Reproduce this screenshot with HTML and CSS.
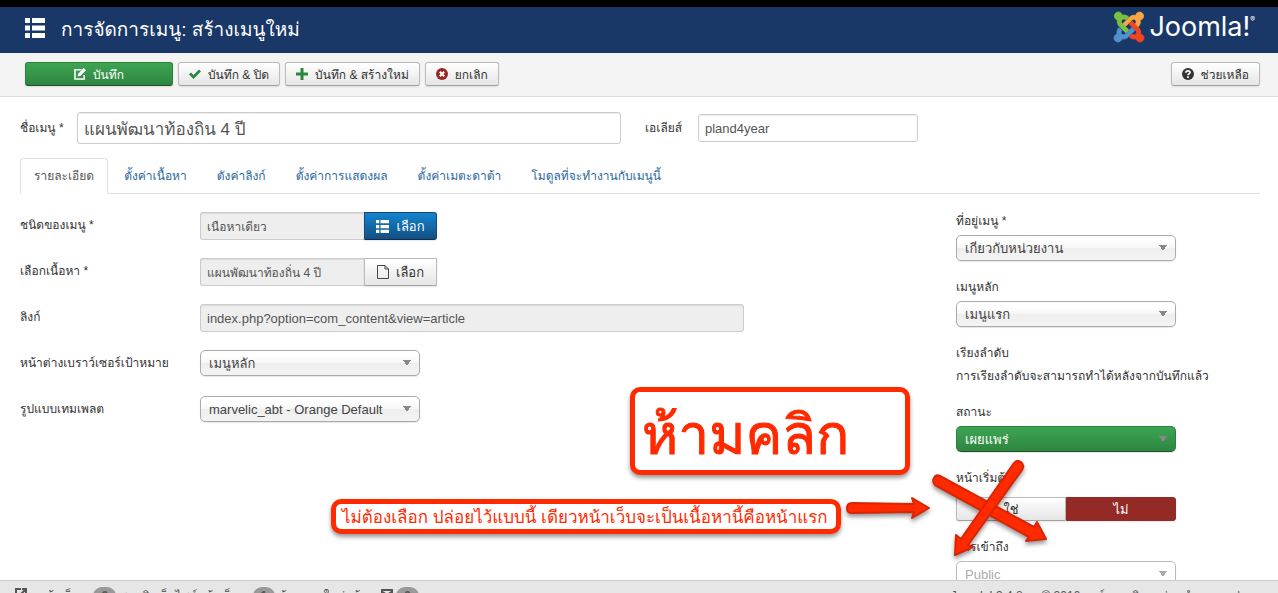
FILE: index.html
```html
<!DOCTYPE html>
<html lang="th">
  <head>
    <meta charset="UTF-8" />
    <meta name="viewport" content="width=device-width, initial-scale=1.0" />
    <title>การจัดการเมนู: สร้างเมนูใหม่</title>
    <link rel="stylesheet" href="styles.css">
  </head>
  <body>
    <!-- Header -->
    <header class="header">
      <svg class="header-icon" viewBox="0 0 20 20" aria-hidden="true">
        <path d="M0 0h5v5H0zM7 0h13v5H7zM0 7.500h5v5H0zM7 7.500h13v5H7zM0 15h5v5H0zM7 15h13v5H7z" />
      </svg>
      <h1>การจัดการเมนู: สร้างเมนูใหม่</h1>
      <a class="logo" href="#" aria-label="Joomla!">
        <svg class="logo-mark" viewBox="0 0 24 24" stroke-width=".6" aria-hidden="true">
          <path fill="#5091cd" stroke="#5091cd" d="M16.719 14.759L14.22 17.26l-2.37 2.37-.462.466c-1.368 1.365-3.297 1.83-5.047 1.397-.327 1.424-1.604 2.49-3.13 2.49C1.438 23.983 0 22.547 0 20.772c0-1.518 1.055-2.789 2.469-3.132-.446-1.765.006-3.726 1.394-5.112l.18-.183 2.376 2.369-.184.181c-.769.779-.769 2.024 0 2.789.771.78 2.022.78 2.787 0l.465-.465 2.367-2.37 2.502-2.506z" />
          <path fill="#f44321" stroke="#f44321" d="M17.643 21.411c-1.822.563-3.885.12-5.328-1.318l-.18-.185 2.365-2.369.18.184c.771.768 2.018.768 2.787 0 .765-.765.769-2.01-.004-2.781l-.466-.465-2.365-2.37-2.502-2.503 2.37-2.369 2.499 2.505 2.367 2.37.464.464c1.365 1.36 1.846 3.278 1.411 5.021 1.56.224 2.759 1.56 2.759 3.18 0 1.784-1.439 3.21-3.209 3.21-1.545 0-2.851-1.096-3.135-2.565z" />
          <path fill="#f9a541" stroke="#f9a541" d="M6.975 9.461L9.458 6.98l2.37-2.369.464-.461c1.365-1.365 3.315-1.842 5.063-1.401C17.6 1.217 18.932.03 20.539.03c1.771 0 3.204 1.437 3.204 3.208 0 1.640-1.225 2.993-2.809 3.186.461 1.772.015 3.764-1.398 5.175l-.18.179-2.369-2.37.18-.181c.768-.765.768-2.007-.004-2.786-.766-.765-2.014-.765-2.781 0l-.465.466-2.369 2.366L9.043 11.78z" />
          <path fill="#7ac143" stroke="#7ac143" d="M.262 3.228C.262 1.452 1.695.016 3.471.016c1.532 0 2.814 1.069 3.134 2.505 1.730-.46 3.664.001 5.026 1.366l.184.184L9.45 6.438l-.184-.181c-.766-.765-2.016-.765-2.783 0-.766.765-.77 2.010-.002 2.776l.466.465 4.866 4.872-2.369 2.369-4.866-4.872-.461-.465C2.759 10.040 2.293 8.110 2.734 6.365 1.300 6.036.262 4.745.262 3.228z" />
        </svg>
        <span class="logo-text">Joomla!<sup>®</sup></span>
      </a>
    </header>

    <!-- Toolbar -->
    <div class="toolbar">
      <button class="btn btn-success btn-save">
        <svg class="icon" viewBox="0 0 12 12" aria-hidden="true">
          <path fill="none" stroke="currentColor" stroke-width="1.600" d="M7.500 1.800H1v9.200h9.200V7" />
          <path fill="currentColor" d="M3.500 8.500l.6-2.800L9.700 0 12 2.300 6.300 8z" />
        </svg>
        บันทึก
      </button>
      <button class="btn">
        <svg class="icon green" viewBox="0 0 12 12" aria-hidden="true">
          <path fill="none" stroke="currentColor" stroke-width="2.800" d="M1 5.500l3.500 3.500L11 2.500" />
        </svg>
        บันทึก &amp; ปิด
      </button>
      <button class="btn">
        <svg class="icon green" viewBox="0 0 12 12" aria-hidden="true">
          <path fill="currentColor" d="M4.500 0h3v4.500H12v3H7.500V12h-3V7.500H0v-3h4.500z" />
        </svg>
        บันทึก &amp; สร้างใหม่
      </button>
      <button class="btn">
        <svg class="icon red" viewBox="0 0 12 12" aria-hidden="true">
          <circle cx="6" cy="6" r="6" fill="currentColor" />
          <path stroke="#fff" stroke-width="2" d="M3.800 3.800l4.400 4.400M8.200 3.800l-4.400 4.400" />
        </svg>
        ยกเลิก
      </button>
      <button class="btn btn-help">
        <svg class="icon" viewBox="0 0 12 12" aria-hidden="true">
          <circle cx="6" cy="6" r="6" fill="currentColor" />
          <path fill="none" stroke="#fff" stroke-width="1.700" d="M3.800 4.800C3.900 2.300 8 2.400 8 4.400 8 5.800 6 5.700 6 7.300M6 8.300v1.600" />
        </svg>
        ช่วยเหลือ
      </button>
    </div>

    <main class="content">
      <!-- Title and alias -->
      <div class="title-row">
        <label for="title">ชื่อเมนู *</label>
        <input class="field title-input" id="title" type="text" value="แผนพัฒนาท้องถิน 4 ปี">
        <label class="alias-label" for="alias">เอเลียส์</label>
        <input class="field alias-input" id="alias" type="text" value="pland4year">
      </div>

      <!-- Tabs -->
      <nav class="tabs">
        <a class="active" href="#details">รายละเอียด</a>
        <a href="#content">ตั้งค่าเนื้อหา</a>
        <a href="#link">ตังค่าลิงก์</a>
        <a href="#display">ตั้งค่าการแสดงผล</a>
        <a href="#meta">ตั้งค่าเมตะดาต้า</a>
        <a href="#modules">โมดูลที่จะทำงานกับเมนูนี้</a>
      </nav>

      <div class="columns" id="details">
        <div class="main-col">
          <div class="control">
            <label for="type">ชนิดของเมนู *</label>
            <div class="append">
              <input class="field" id="type" type="text" value="เนือหาเดียว" readonly>
              <button class="btn btn-primary">
                <svg class="icon-list" viewBox="0 0 20 20" aria-hidden="true">
                  <path d="M0 0h5v5H0zM7 0h13v5H7zM0 7.500h5v5H0zM7 7.500h13v5H7zM0 15h5v5H0zM7 15h13v5H7z" />
                </svg>
                เลือก
              </button>
            </div>
          </div>
          <div class="control">
            <label for="article">เลือกเนื้อหา *</label>
            <div class="append">
              <input class="field" id="article" type="text" value="แผนพัฒนาท้องถิ่น 4 ปี" readonly>
              <button class="btn">
                <svg class="icon-file" viewBox="0 0 12 14" aria-hidden="true">
                  <path d="M.5.500h7.500l3.500 3.500v9.500H.5zM8 .500v3.500h3.500" />
                </svg>
                เลือก
              </button>
            </div>
          </div>
          <div class="control">
            <label for="link">ลิงก์</label>
            <input class="field link-input" id="link" type="text" value="index.php?option=com_content&amp;view=article" readonly>
          </div>
          <div class="control">
            <label for="target">หน้าต่างเบราว์เซอร์เป้าหมาย</label>
            <select class="select" id="target"><option>เมนูหลัก</option></select>
          </div>
          <div class="control">
            <label for="template">รูปแบบเทมเพลต</label>
            <select class="select" id="template"><option>marvelic_abt - Orange Default</option></select>
          </div>
        </div>

        <div class="side-col">
          <div class="group">
            <label for="menutype">ที่อยู่เมนู *</label>
            <select class="select" id="menutype"><option>เกี่ยวกับหน่วยงาน</option></select>
          </div>
          <div class="group">
            <label for="parent">เมนูหลัก</label>
            <select class="select" id="parent"><option>เมนูแรก</option></select>
          </div>
          <div class="group">
            <span>เรียงลำดับ</span>
            <p>การเรียงลำดับจะสามารถทำได้หลังจากบันทึกแล้ว</p>
          </div>
          <div class="group">
            <label for="status">สถานะ</label>
            <select class="select select-success" id="status"><option>เผยแพร่</option></select>
          </div>
          <div class="group group-home">
            <span>หน้าเริ่มต้น</span>
            <div class="switch">
              <button class="btn">ใช่</button>
              <button class="btn btn-danger">ไม่</button>
            </div>
          </div>
          <div class="group">
            <label for="access">การเข้าถึง</label>
            <select class="select select-muted" id="access"><option>Public</option></select>
          </div>
        </div>
      </div>
    </main>

    <!-- Notes over the form -->
    <div class="note note-big">ห้ามคลิก</div>
    <div class="note note-small">ไม่ต้องเลือก ปล่อยไว้แบบนี้ เดียวหน้าเว็บจะเป็นเนื้อหานี้คือหน้าแรก</div>
    <svg class="arrows" viewBox="0 0 210 120" aria-hidden="true">
      <path d="M6 46Q1 46 1 51Q1 56 6 56L68 55L66 61L83 51L66 41L68 47Z" />
      <path d="M94 19Q90 17 88 21Q86 25 89 28L183 80L180 84L200 82L191 65L188 70Z" />
      <path d="M168 6Q171 2 175 5Q179 8 176 13L122 88L127 90L109 98L110 78L115 82Z" />
    </svg>

    <!-- Status bar -->
    <footer class="status">
      <a href="#">
        <svg class="icon" viewBox="0 0 12 12" aria-hidden="true">
          <path fill="none" stroke="currentColor" stroke-width="2" d="M6 1H1v10h10V7M7 1h4v4M11 1L5 7" />
        </svg>
        ดูหน้าเว็บ
      </a>
      <span><b class="badge">0</b> สมาชิกเว็บไซต์หน้าเว็บ</span>
      <span><b class="badge">1</b> ข้อความใหม่แล้ว</span>
      <span>
        <svg class="icon" viewBox="0 0 12 12" aria-hidden="true">
          <path fill="none" stroke="currentColor" stroke-width="2" d="M0 2h12v8H0zM0 3l6 4 6-4" />
        </svg>
        <b class="badge">0</b>
      </span>
      <span class="copyright">Joomla! 3.4.8 — © 2016 องค์การบริหารส่วนตำบลบางปลา</span>
    </footer>
  </body>
</html>
```
FILE: styles.css
```css
* {
  box-sizing: border-box;
}

body {
  margin: 0;
  height: 100vh;
  overflow: hidden;
  display: flex;
  flex-direction: column;
  position: relative;
  font-family: "Liberation Sans", "Loma", "Noto Sans Thai", sans-serif;
  font-size: 12px;
  line-height: 18px;
  color: #333;
  background: #fff;
}

input,
select,
button {
  font-family: inherit;
  font-size: 12px;
}

/* Header */
.header {
  flex: none;
  display: flex;
  align-items: center;
  height: 53px;
  padding: 0 23px 0 25px;
  border-top: 7px solid #000;
  background: #1a3867;
  color: #fff;
}

.header-icon {
  width: 20px;
  height: 20px;
  margin-right: 16px;
  margin-bottom: 4px;
  fill: #fff;
}

.header h1 {
  margin: 0;
  font-size: 19px;
  line-height: 36px;
  font-weight: normal;
}

.logo {
  display: flex;
  align-items: center;
  gap: 5px;
  height: 40px;
  margin-left: auto;
  padding-bottom: 7px;
  color: #fff;
  text-decoration: none;
}

.logo-mark {
  width: 30px;
  height: 30px;
  overflow: visible;
}

.logo-text {
  font-family: Inter, sans-serif;
  font-size: 27px;
  font-weight: 400;
  line-height: 30px;
}

.logo-text sup {
  font-size: 7px;
  line-height: 7px;
  vertical-align: 14px;
}

/* Toolbar */
.toolbar {
  flex: none;
  display: flex;
  gap: 5px;
  padding: 9px 18px 10px 25px;
  border-bottom: 1px solid #ddd;
  background: #f4f4f4;
}

.btn {
  display: flex;
  align-items: center;
  justify-content: center;
  gap: 7px;
  height: 24px;
  padding: 0 10px;
  border: 1px solid #bbb;
  border-bottom-color: #a2a2a2;
  border-radius: 3px;
  background: linear-gradient(#fff, #e6e6e6);
  color: #333;
  white-space: nowrap;
  box-shadow: 0 1px 2px rgba(0, 0, 0, 0.1);
}

.btn-success {
  border-color: #2d7f3c #2d7f3c #1c5327;
  background: linear-gradient(#3da553, #2f8540);
  color: #fff;
}

.btn-save {
  width: 148px;
}

.btn-help {
  margin-left: auto;
}

.icon {
  flex: none;
  width: 12px;
  height: 12px;
}

.green {
  color: #2f8540;
}

.red {
  color: #942a25;
}

/* Title and alias */
.content {
  flex: 1;
  min-height: 0;
  padding: 15px 18px 0 20px;
  overflow: hidden;
}

.title-row {
  display: flex;
  align-items: center;
}

.title-row label {
  width: 57px;
  white-space: nowrap;
}

.title-row .alias-label {
  width: 53px;
  margin-left: 24px;
}

.field {
  height: 28px;
  padding: 0 6px;
  border: 1px solid #ccc;
  border-radius: 3px;
  color: #555;
  box-shadow: inset 0 1px 1px rgba(0, 0, 0, 0.08);
}

.field[readonly] {
  background: #eee;
}

.title-input {
  width: 544px;
  height: 32px;
  font-size: 17px;
}

.alias-input {
  width: 220px;
  font-size: 13px;
}

/* Tabs */
.tabs {
  display: flex;
  margin-top: 14px;
  border-bottom: 1px solid #ddd;
}

.tabs a {
  height: 36px;
  margin: 0 2px -1px 0;
  padding: 8px 13px;
  border: 1px solid transparent;
  border-radius: 4px 4px 0 0;
  color: #2a69a0;
  text-decoration: none;
}

.tabs .active {
  border-color: #ddd #ddd #fff;
  background: #fff;
  color: #555;
}

/* Form columns */
.columns {
  display: flex;
  justify-content: space-between;
}

.main-col {
  width: 724px;
  padding-top: 18px;
}

.control {
  display: flex;
  height: 28px;
  margin-bottom: 18px;
}

.control label {
  width: 180px;
  padding-top: 4px;
}

.append {
  display: flex;
}

.append .field {
  width: 164px;
  border-right: 0;
  border-radius: 3px 0 0 3px;
}

.append .btn {
  width: 73px;
  height: 28px;
  border-radius: 0;
  font-size: 13px;
}

.append .btn-primary {
  border-color: #15497c #15497c #0d2d4d;
  border-radius: 0 3px 3px 0;
  background: linear-gradient(#1384d0, #134f82);
  color: #fff;
}

.icon-list {
  width: 13px;
  height: 13px;
  fill: #fff;
}

.icon-file {
  width: 12px;
  height: 14px;
  fill: none;
  stroke: #444;
}

.link-input {
  width: 544px;
  font-size: 13px;
}

.select {
  display: block;
  width: 220px;
  height: 26px;
  padding: 0 8px;
  border: 1px solid #aaa;
  border-radius: 5px;
  appearance: none;
  background:
    linear-gradient(to bottom left, #888 50%, transparent 52%) right 12px top 9px / 4px 6px no-repeat,
    linear-gradient(to bottom right, #888 50%, transparent 52%) right 8px top 9px / 4px 6px no-repeat,
    linear-gradient(#fff 20%, #f6f6f6 50%, #eee 52%, #f4f4f4);
  color: #444;
  font-size: 13px;
  box-shadow: 0 1px 1px rgba(0, 0, 0, 0.1);
}

.select-success {
  border-color: #2d7f3c #2d7f3c #1c5327;
  background:
    linear-gradient(to bottom left, #888 50%, transparent 52%) right 12px top 9px / 4px 6px no-repeat,
    linear-gradient(to bottom right, #888 50%, transparent 52%) right 8px top 9px / 4px 6px no-repeat,
    linear-gradient(#3da553, #2f8540);
  color: #fff;
}

.select-muted {
  border-color: #bbb;
  background:
    linear-gradient(to bottom left, #aaa 50%, transparent 52%) right 12px top 9px / 4px 6px no-repeat,
    linear-gradient(to bottom right, #aaa 50%, transparent 52%) right 8px top 9px / 4px 6px no-repeat,
    #fff;
  color: #aaa;
}

/* Right column */
.side-col {
  width: 304px;
  padding-top: 18px;
}

.group {
  margin-bottom: 17px;
}

.group label,
.group span {
  display: block;
  margin-bottom: 5px;
}

.group p {
  margin: 0;
  padding-bottom: 1px;
}

.group-home span {
  margin-bottom: 10px;
}

.switch {
  display: flex;
  width: 220px;
}

.switch .btn {
  flex: 1;
  border-radius: 3px 0 0 3px;
  font-size: 13px;
}

.switch .btn-danger {
  border-color: #942a25;
  border-radius: 0 3px 3px 0;
  background: #942a25;
  color: #fff;
}

/* Notes */
.note {
  position: absolute;
  border: 5px solid #ff2a00;
  border-radius: 10px;
  background: #fff;
  color: #ff2a00;
  white-space: nowrap;
  box-shadow: 0 3px 4px rgba(0, 0, 0, 0.4);
}

.note-big {
  left: 630px;
  top: 387px;
  width: 280px;
  height: 88px;
  padding-left: 7px;
  font-size: 55px;
  line-height: 86px;
  -webkit-text-stroke: 1px #ff2a00;
}

.note-small {
  left: 331px;
  top: 499px;
  width: 510px;
  height: 35px;
  padding-left: 6px;
  font-size: 17px;
  line-height: 27px;
}

.arrows {
  position: absolute;
  left: 846px;
  top: 457px;
  width: 210px;
  height: 120px;
  fill: #ff2a00;
  stroke: #d92505;
  stroke-width: 2;
  stroke-linejoin: round;
  filter: drop-shadow(0 3px 2px rgba(0, 0, 0, 0.4));
}

/* Status bar */
.status {
  flex: none;
  display: flex;
  gap: 14px;
  height: 13px;
  padding: 6px 24px 0 15px;
  border-top: 1px solid #ccc;
  background: #e6e6e6;
  overflow: hidden;
  font-size: 12px;
  color: #555;
}

.status a {
  color: #555;
  text-decoration: none;
}

.badge {
  display: inline-block;
  padding: 0 8px;
  border-radius: 9px;
  background: #999;
}

.copyright {
  margin-left: auto;
}
```
